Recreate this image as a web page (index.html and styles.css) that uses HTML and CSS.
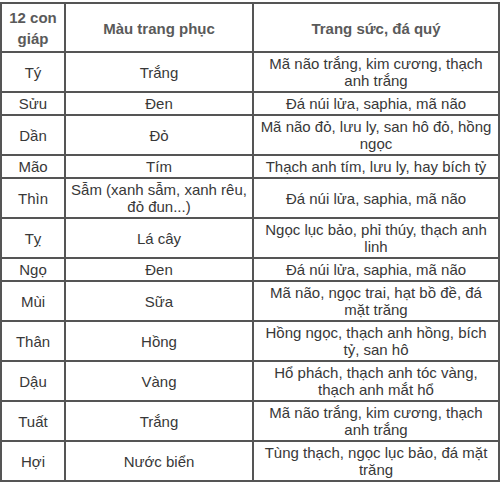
FILE: index.html
```html
<!DOCTYPE html>
<html lang="vi">
<head>
<meta charset="utf-8">
<title>12 con giáp</title>
<link rel="stylesheet" href="styles.css">
</head>
<body>
<table class="zodiac">
  <colgroup>
    <col class="c1">
    <col class="c2">
    <col class="c3">
  </colgroup>
  <thead>
    <tr><th>12 con giáp</th><th>Màu trang phục</th><th>Trang sức, đá quý</th></tr>
  </thead>
  <tbody>
    <tr><td>Tý</td><td>Trắng</td><td>Mã não trắng, kim cương, thạch anh trắng</td></tr>
    <tr><td>Sửu</td><td>Đen</td><td>Đá núi lửa, saphia, mã não</td></tr>
    <tr><td>Dần</td><td>Đỏ</td><td>Mã não đỏ, lưu ly, san hô đỏ, hồng ngọc</td></tr>
    <tr><td>Mão</td><td>Tím</td><td>Thạch anh tím, lưu ly, hay bích tỷ</td></tr>
    <tr><td>Thìn</td><td>Sẫm (xanh sẫm, xanh rêu, đỏ đun...)</td><td>Đá núi lửa, saphia, mã não</td></tr>
    <tr><td>Tỵ</td><td>Lá cây</td><td>Ngọc lục bảo, phỉ thúy, thạch anh linh</td></tr>
    <tr><td>Ngọ</td><td>Đen</td><td>Đá núi lửa, saphia, mã não</td></tr>
    <tr><td>Mùi</td><td>Sữa</td><td>Mã não, ngọc trai, hạt bồ đề, đá mặt trăng</td></tr>
    <tr><td>Thân</td><td>Hồng</td><td>Hồng ngọc, thạch anh hồng, bích tỷ, san hô</td></tr>
    <tr><td>Dậu</td><td>Vàng</td><td>Hổ phách, thạch anh tóc vàng, thạch anh mắt hổ</td></tr>
    <tr><td>Tuất</td><td>Trắng</td><td>Mã não trắng, kim cương, thạch anh trắng</td></tr>
    <tr><td>Hợi</td><td>Nước biển</td><td>Tùng thạch, ngọc lục bảo, đá mặt trăng</td></tr>
  </tbody>
</table>
</body>
</html>
```
FILE: styles.css
```css
html, body {
  margin: 0;
  padding: 0;
  background: #ffffff;
}

body {
  padding-top: 2px;
  font-family: "Liberation Sans", Arial, sans-serif;
  font-size: 15px;
  color: #383838;
}

.zodiac {
  border-collapse: collapse;
  table-layout: fixed;
  width: 498px;
  border: 2px solid #3a3a3a;
}

.zodiac .c1 { width: 64px; }
.zodiac .c2 { width: 188px; }
.zodiac .c3 { width: 246px; }

.zodiac th,
.zodiac td {
  border: 2px solid #555555;
  text-align: center;
  vertical-align: middle;
  padding: 2px 3px;
  line-height: 17px;
}

.zodiac th {
  font-size: 15px;
  font-weight: bold;
  color: #5a5a5a;
  line-height: 21px;
  padding: 3px 2px 2px;
}
```
